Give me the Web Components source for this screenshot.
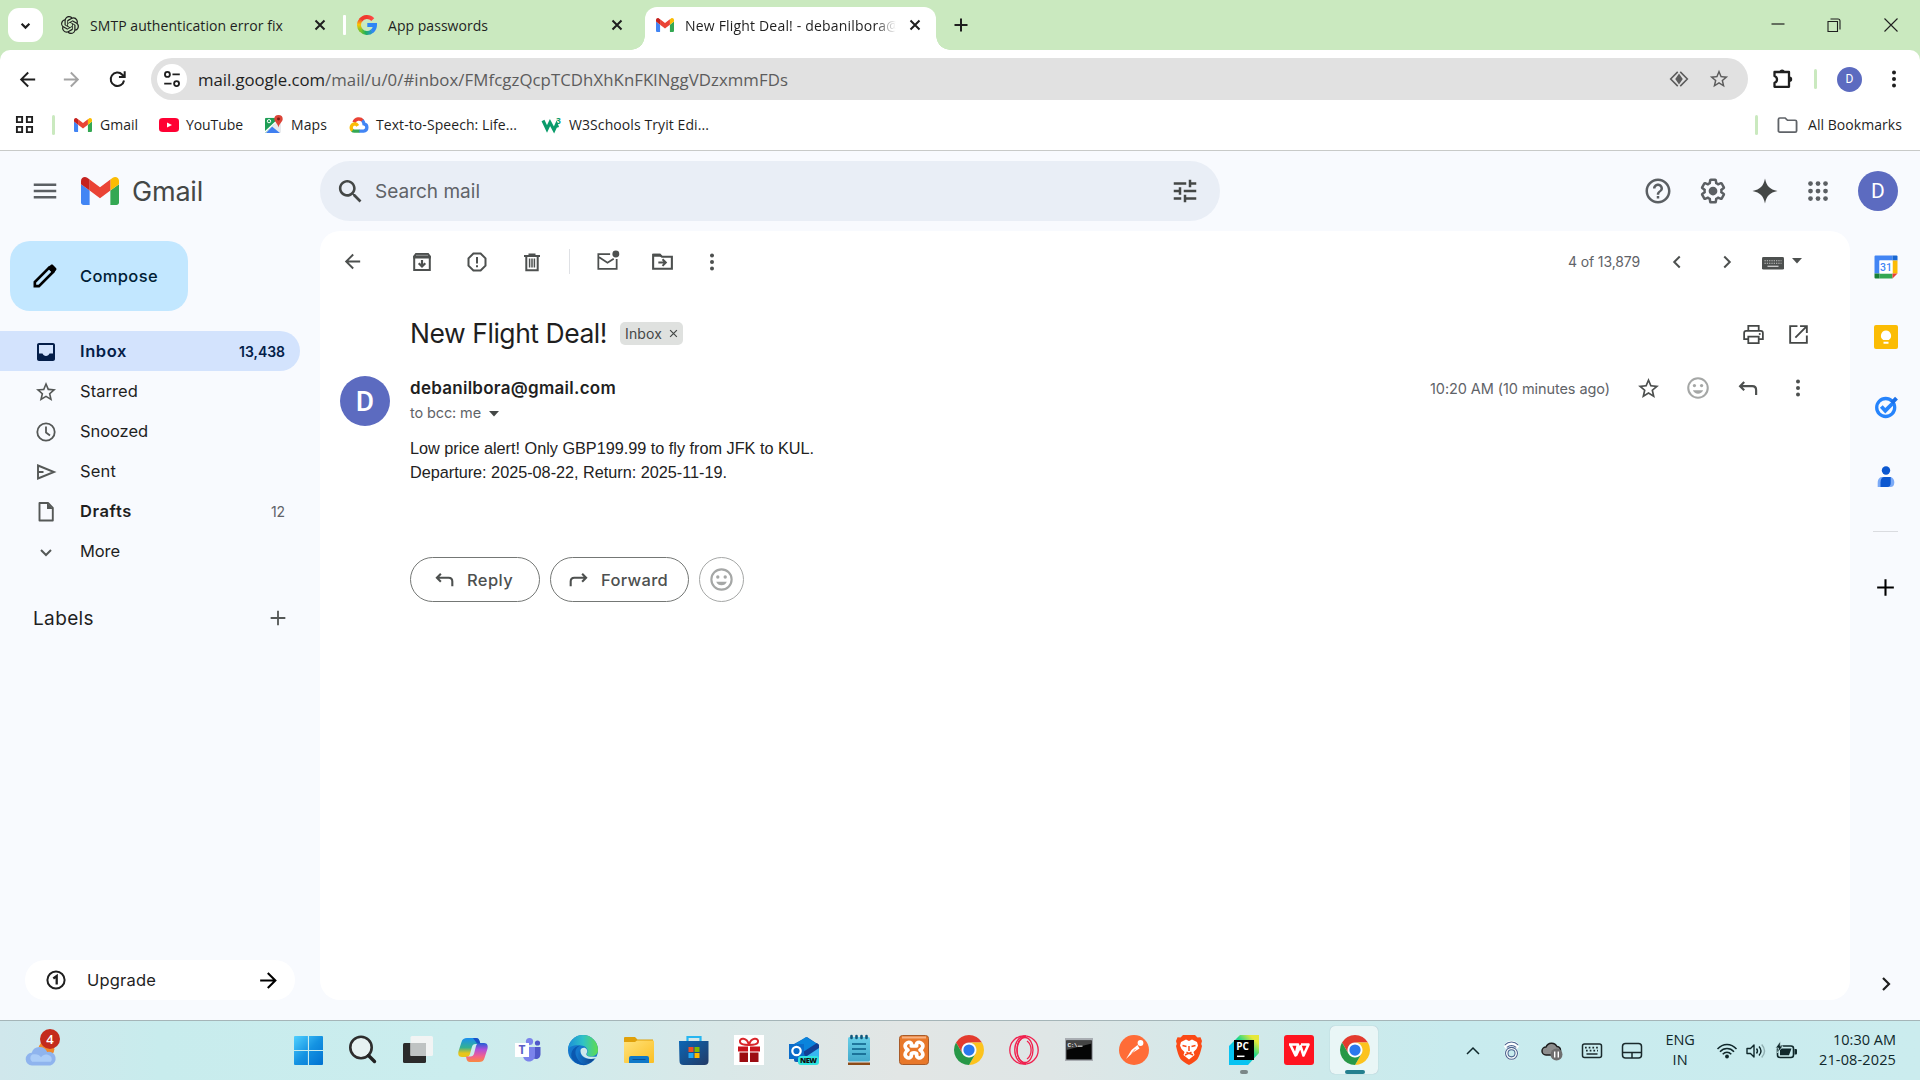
<!DOCTYPE html>
<html lang="en">
<head>
<meta charset="utf-8">
<title>New Flight Deal! - Gmail</title>
<style>
html,body{margin:0;padding:0}
body{width:1920px;height:1080px;overflow:hidden;background:#f8fafd;font-family:Inter,"Open Sans",sans-serif;color:#1f1f1f}
</style>
</head>
<body>
<app-desktop></app-desktop>
<script>
const st = (d, w = 2, extra = '') => `<path d="${d}" fill="none" stroke="currentColor" stroke-width="${w}" ${extra}/>`;
const fl = (d, c = 'currentColor') => `<path d="${d}" fill="${c}"/>`;
const smile = st('M12 3a9 9 0 1 0 0 18a9 9 0 1 0 0-18z', 1.9) + '<circle cx="8.7" cy="9.8" r="1.5" fill="currentColor"/><circle cx="15.3" cy="9.8" r="1.5" fill="currentColor"/>' + fl('M7.3 14h9.400c-.8 2-2.600 3.200-4.700 3.200S8.100 16 7.300 14z');
const chrome = '<path d="M1.610 6A12 12 0 0 1 22.390 6H12A6 6 0 0 0 6.800 15Z" fill="#e33b2e"/><path d="M22.390 6A12 12 0 0 1 12 24L17.200 15A6 6 0 0 0 12 6Z" fill="#fcc31e"/><path d="M12 24A12 12 0 0 1 1.610 6L6.800 15A6 6 0 0 0 17.200 15Z" fill="#279847"/><circle cx="12" cy="12" r="5.700" fill="#fff"/><circle cx="12" cy="12" r="4.500" fill="#2a78ee"/>';
const ICONS = {
  chev: ['0 0 24 24', st('M6.500 9.500l5.500 5.500 5.500-5.500', 3)],
  chevThin: ['0 0 24 24', st('M7 10l5 5 5-5', 2)],
  left: ['0 0 24 24', st('M15 6l-6 6 6 6', 2.2)],
  right: ['0 0 24 24', st('M9 6l6 6-6 6', 2.2)],
  up: ['0 0 24 24', st('M4 16l8-8 8 8', 2)],
  x: ['0 0 12 12', st('M1.500 1.500l9 9M10.500 1.500l-9 9', 2)],
  xThin: ['0 0 12 12', st('M1.500 1.500l9 9M10.500 1.500l-9 9', 1.6)],
  winx: ['0 0 14 14', st('M.5.5l13 13M13.500.5l-13 13', 1.1)],
  min: ['0 0 14 14', st('M.5 6h13', 1.2)],
  restore: ['0 0 14 14', st('M1 3.500h9.500V13.500H1zM3.500 1H11a2 2 0 0 1 2 2v8.500', 1.1)],
  plus: ['0 0 24 24', st('M12 4v16M4 12h16', 2)],
  plusBold: ['0 0 16 16', st('M8 1.500v13M1.500 8h13', 2)],
  back: ['0 0 24 24', fl('M20 11H7.830l5.590-5.590L12 4l-8 8 8 8 1.410-1.410L7.830 13H20v-2z')],
  fwd: ['0 0 24 24', fl('M12 4l-1.410 1.410L16.170 11H4v2h12.170l-5.580 5.590L12 20l8-8z')],
  reload: ['0 0 24 24', st('M18.800 13a7 7 0 1 1-1.800-6l1.600 1.700M19.500 3.500V9.500H13.500', 2.1)],
  site: ['0 0 24 24', '<circle cx="7" cy="7" r="2.700" fill="none" stroke="currentColor" stroke-width="2"/><circle cx="17" cy="17" r="2.700" fill="none" stroke="currentColor" stroke-width="2"/>' + st('M12.500 7h8M3.500 17h8', 2)],
  lens: ['0 0 24 24', st('M10.500 3.500L2 12l8.500 8.500M13.500 3.500L22 12l-8.500 8.500', 1.9) + fl('M12 5.500l4.500 6.500-4.500 6.500-4.500-6.500z')],
  star: ['0 0 24 24', fl('M22 9.240l-7.190-.62L12 2 9.190 8.630 2 9.240l5.460 4.730L5.820 21 12 17.270 18.180 21l-1.630-7.030L22 9.240zM12 15.400l-3.760 2.270 1-4.280-3.320-2.880 4.380-.38L12 6.100l1.710 4.040 4.380.38-3.320 2.880 1 4.280L12 15.400z')],
  puzzle: ['0 0 24 24', st('M3.500 5h14.500v14.800H3.500v-4c1.600-.6 2.500-1.800 2.500-3.400s-.9-2.800-2.500-3.400z', 2.300, 'stroke-linejoin="round"') + fl('M8.500 5a2.600 2.600 0 0 1 5.200 0zM18.500 9.600a2.700 2.700 0 0 1 0 5.400z')],
  dots: ['0 0 24 24', '<g fill="currentColor"><circle cx="12" cy="5.500" r="2"/><circle cx="12" cy="12" r="2"/><circle cx="12" cy="18.500" r="2"/></g>'],
  grid4: ['0 0 20 20', st('M2 2h5.500v5.500H2zM12.500 2H18v5.500h-5.500zM2 12.500h5.500V18H2zM12.500 12.500H18V18h-5.500z', 2)],
  folder: ['0 0 22 20', st('M1.500 4c0-1 .6-1.800 1.500-1.800h5.500l2.500 2.500h8c.9 0 1.500.7 1.500 1.600v10c0 .9-.6 1.600-1.500 1.600H3c-.9 0-1.500-.7-1.500-1.600z', 1.900)],
  gmail: ['52 42 88 66', '<path fill="#4285f4" d="M58 108h14V74L52 59v43c0 3.320 2.690 6 6 6"/><path fill="#34a853" d="M120 108h14c3.320 0 6-2.690 6-6V59l-20 15"/><path fill="#fbbc04" d="M120 48v26l20-15v-8c0-7.420-8.470-11.650-14.400-7.200"/><path fill="#ea4335" d="M72 74V48l24 18 24-18v26L96 92"/><path fill="#c5221f" d="M52 51v8l20 15V48l-5.600-4.200c-5.940-4.450-14.400-.22-14.400 7.200"/>'],
  youtube: ['0 0 20 17', '<rect y="0" width="20" height="17" rx="4" fill="#ff0033"/><path d="M8 5.500v6l5-3z" fill="#fff"/>'],
  maps: ['0 0 18 20', '<clipPath id="c"><rect y="3" width="16" height="16" rx="1.500"/></clipPath><g clip-path="url(#c)"><path d="M0 3h16v16H0z" fill="#e8eaed"/><path d="M0 3h12L9 10 0 19z" fill="#1e9e55"/><path d="M1 19l6-7 8 7z" fill="#3f7ff0"/><path d="M0 18L11 7" stroke="#fff" stroke-width="1.500"/></g><circle cx="4" cy="6.500" r="1.700" fill="none" stroke="#fff"/><path d="M13.500 0a4.200 4.200 0 0 1 4.200 4.200c0 3-3.400 4.500-4.200 9-.8-4.500-4.200-6-4.200-9A4.200 4.200 0 0 1 13.500 0z" fill="#db4437"/><circle cx="13.500" cy="4.200" r="1.500" fill="#7b1b14"/>'],
  gcloud: ['0 0 24 20', '<g fill="none" stroke-width="4"><path d="M6 7.500A6.200 6.200 0 0 1 16.500 5.600" stroke="#ea4335"/><path d="M16 5.300a6 6 0 0 1 2 4A4.300 4.300 0 0 1 17.500 17.800H12" stroke="#4285f4"/><path d="M12.500 17.800H6.500a4.300 4.300 0 0 1-2.800-1" stroke="#34a853"/><path d="M4.200 17A4.500 4.500 0 0 1 6.500 9.200c1.800 0 3.200 1 4 2.400" stroke="#fbbc05"/></g>'],
  w3: ['0 0 21 20', '<path d="M2 5.500l4 8.500 3-6.500 4 7.500 2.500-5.500 1 3" fill="none" stroke="#0a9b6a" stroke-width="3.200"/><text x="15" y="9" font-family="Open Sans" font-size="8.500" font-weight="700" fill="#0a9b6a">3</text>'],
  openai: ['0 0 24 24', fl('M22.282 9.821a5.985 5.985 0 0 0-.516-4.910 6.046 6.046 0 0 0-6.510-2.900A6.065 6.065 0 0 0 4.981 4.180a5.985 5.985 0 0 0-3.998 2.900 6.046 6.046 0 0 0 .743 7.097 5.980 5.980 0 0 0 .510 4.911 6.051 6.051 0 0 0 6.515 2.900A5.985 5.985 0 0 0 13.260 24a6.056 6.056 0 0 0 5.772-4.206 5.990 5.990 0 0 0 3.997-2.900 6.056 6.056 0 0 0-.747-7.073zM13.260 22.430a4.476 4.476 0 0 1-2.876-1.040l.141-.081 4.779-2.758a.795.795 0 0 0 .392-.681v-6.737l2.020 1.168a.071.071 0 0 1 .038.052v5.583a4.504 4.504 0 0 1-4.494 4.494zM3.600 18.304a4.470 4.470 0 0 1-.535-3.014l.142.085 4.783 2.759a.771.771 0 0 0 .780 0l5.843-3.369v2.332a.080.080 0 0 1-.033.062L9.740 19.950a4.500 4.500 0 0 1-6.140-1.646zM2.340 7.896a4.485 4.485 0 0 1 2.366-1.973V11.600a.766.766 0 0 0 .388.676l5.815 3.355-2.020 1.168a.076.076 0 0 1-.071 0l-4.830-2.786A4.504 4.504 0 0 1 2.340 7.872zm16.597 3.855l-5.833-3.387L15.119 7.200a.076.076 0 0 1 .071 0l4.830 2.791a4.494 4.494 0 0 1-.676 8.105v-5.678a.790.790 0 0 0-.407-.667zm2.010-3.023l-.141-.085-4.774-2.782a.776.776 0 0 0-.785 0L9.409 9.230V6.897a.066.066 0 0 1 .028-.061l4.830-2.787a4.500 4.500 0 0 1 6.680 4.660zm-12.640 4.135l-2.020-1.164a.080.080 0 0 1-.038-.057V6.075a4.500 4.500 0 0 1 7.375-3.453l-.142.080L8.704 5.460a.795.795 0 0 0-.393.681zm1.097-2.365l2.602-1.500 2.607 1.500v2.999l-2.597 1.500-2.607-1.500z')],
  google: ['0 0 20 20', '<defs><linearGradient id="a" x1="0" x2="1"><stop offset=".5" stop-color="#f03a2e"/><stop offset="1" stop-color="#fd4a45"/></linearGradient><linearGradient id="b" x1="0" y1="0" x2="0" y2="1"><stop offset="0" stop-color="#f2552c"/><stop offset=".45" stop-color="#fdc302"/><stop offset="1" stop-color="#7fc22b"/></linearGradient><linearGradient id="d" x1="0" x2="1"><stop offset="0" stop-color="#7bc22d"/><stop offset=".4" stop-color="#20b15a"/><stop offset="1" stop-color="#2b90e0"/></linearGradient></defs><g fill="none" stroke-width="4"><path d="M3.500 5.300A8 8 0 0 1 15.800 4.600" stroke="url(#a)"/><path d="M3.900 4.800A8 8 0 0 0 4.200 15.500" stroke="url(#b)"/><path d="M4 15.300A8 8 0 0 0 15.300 16" stroke="url(#d)"/><path d="M10.300 10H18A8 8 0 0 1 15 16.200" stroke="#2f85f5"/></g>'],
  menu: ['0 0 24 24', fl('M3 18h18v-2H3v2zm0-5h18v-2H3v2zm0-7v2h18V6H3z')],
  search: ['0 0 24 24', fl('M15.500 14h-.79l-.28-.27C15.410 12.590 16 11.110 16 9.500 16 5.910 13.090 3 9.500 3S3 5.910 3 9.500 5.910 16 9.500 16c1.610 0 3.090-.59 4.230-1.570l.27.28v.79l5 4.990L20.490 19l-4.990-5zm-6 0C7.010 14 5 11.990 5 9.500S7.010 5 9.500 5 14 7.010 14 9.500 11.990 14 9.500 14z')],
  tune: ['0 0 24 24', fl('M3 17v2h6v-2H3zM3 5v2h10V5H3zm10 16v-2h8v-2h-8v-2h-2v6h2zM7 9v2H3v2h4v2h2V9H7zm14 4v-2H11v2h10zm-6-4h2V7h4V5h-4V3h-2v6z')],
  help: ['0 0 24 24', fl('M11 18h2v-2h-2v2zm1-16C6.480 2 2 6.480 2 12s4.480 10 10 10 10-4.480 10-10S17.520 2 12 2zm0 18c-4.410 0-8-3.590-8-8s3.590-8 8-8 8 3.590 8 8-3.590 8-8 8zm0-14c-2.210 0-4 1.790-4 4h2c0-1.100.9-2 2-2s2 .9 2 2c0 2-3 1.750-3 5h2c0-2.250 3-2.500 3-5 0-2.210-1.790-4-4-4z')],
  gear: ['0 0 24 24', '<g transform="translate(1.200 1.200) scale(.9)"><path fill="none" stroke="currentColor" stroke-width="2.200" d="M19.430 12.980c.04-.32.07-.64.07-.98 0-.34-.03-.66-.07-.98l2.110-1.650c.19-.15.24-.42.12-.64l-2-3.460c-.09-.16-.26-.25-.44-.25-.06 0-.12.010-.17.030l-2.490 1c-.52-.4-1.080-.73-1.690-.98l-.38-2.650C14.460 2.180 14.250 2 14 2h-4c-.25 0-.46.18-.49.42l-.38 2.650c-.61.25-1.170.59-1.690.98l-2.490-1c-.06-.02-.12-.03-.18-.03-.17 0-.34.09-.43.25l-2 3.460c-.13.22-.07.49.12.64l2.110 1.650c-.04.32-.07.65-.07.98 0 .33.03.66.07.98l-2.110 1.650c-.19.15-.24.42-.12.64l2 3.460c.09.16.26.25.44.25.06 0 .12-.01.17-.03l2.490-1c.52.4 1.080.73 1.690.98l.38 2.650c.03.24.24.42.49.42h4c.25 0 .46-.18.49-.42l.38-2.650c.61-.25 1.170-.59 1.690-.98l2.490 1c.06.02.12.03.18.03.17 0 .34-.09.43-.25l2-3.460c.12-.22.07-.49-.12-.64l-2.110-1.650z"/></g><circle cx="12" cy="12" r="3.500" fill="currentColor"/>'],
  spark: ['0 0 24 24', fl('M12 2c1.300 6.200 3.800 8.700 10 10-6.200 1.300-8.700 3.800-10 10-1.300-6.200-3.800-8.700-10-10 6.200-1.300 8.700-3.800 10-10z')],
  apps: ['0 0 24 24', '<g fill="currentColor">' + [6, 12, 18].map(y => [6, 12, 18].map(x => `<circle cx="${x}" cy="${y}" r="1.900"/>`).join('')).join('') + '</g>'],
  pencil: ['0 0 24 24', st('M4 20v-3.400L15.900 4.700l3.400 3.400L7.400 20z', 2.200) + fl('M14.500 5l2.600-2.500c.6-.5 1.400-.5 2 0l2.400 2.400c.5.6.5 1.400 0 2L19 9.500z')],
  inbox: ['0 0 24 24', fl('M19 3H5c-1.100 0-2 .9-2 2v14c0 1.100.9 2 2 2h14c1.100 0 2-.9 2-2V5c0-1.100-.9-2-2-2zm0 10.500h-3.500c-.6 1.500-1.900 2.500-3.500 2.500s-2.900-1-3.500-2.500H5V5h14v8.500z')],
  clock: ['0 0 24 24', '<circle cx="12" cy="12" r="8.700" fill="none" stroke="currentColor" stroke-width="1.800"/>' + st('M12 6.500v6l4 3', 1.800)],
  send: ['0 0 24 24', st('M4 5.500L20 12 4 18.500zM4 12h5.500', 1.900)],
  doc: ['0 0 24 24', st('M7 3h7l4.800 4.800V20.500H5.500V3z', 1.900, 'stroke-linejoin="round"') + fl('M13 3v6h6z')],
  one: ['0 0 20 20', '<circle cx="10" cy="10" r="8.600" fill="none" stroke="currentColor" stroke-width="2"/>' + st('M7.300 8.500L10.700 6v8.500', 2.300)],
  archive: ['0 0 24 24', st('M4.200 6v14h15.600V6', 2) + fl('M5.500 3h13l2.300 3v2.500H3.200V6z') + st('M6 5.300h12', .8, 'opacity=".5" style="color:#fff"') + st('M12 10v6M8.700 13.200l3.300 3.300 3.300-3.300', 2.200)],
  spam: ['0 0 24 24', st('M8.400 3.500h7.200l4.900 4.900v7.200l-4.900 4.900H8.400l-4.900-4.900V8.400z', 2) + st('M12 7v6.500M12 15.200v2', 2)],
  trash: ['0 0 24 24', st('M6.300 6.500v13.800h11.400V6.500', 2) + fl('M8.500 3.500h7V5H20v2H4V5h4.500z') + st('M9.600 8.500v9M14.400 8.500v9M12 8.500v9', 1.500)],
  unread: ['0 0 24 24', st('M14.500 5H3.200v14h17.600V9.500M4 8l8 5.200 6-3.800', 1.700) + '<circle cx="20" cy="4.800" r="3.300" fill="currentColor"/>'],
  move: ['0 0 24 24', st('M3 5.500h6.500l2 2H21V19H3z', 2) + fl('M3 4.500h7l2 3H3z') + st('M8 13h7M12 9.800l3.200 3.200-3.200 3.200', 1.900)],
  keyboard: ['0 0 22 14', '<rect width="22" height="13.500" rx="1.500" fill="currentColor"/><path d="M2.500 4h17M2.500 6.800h17" stroke="#c8c8c8" stroke-width="1.200" stroke-dasharray="1.300 1"/><path d="M5.500 10h11" stroke="#d8d8d8" stroke-width="1.300"/>'],
  caret: ['0 0 10 6', fl('M0 0h10L5 5.500z')],
  print: ['0 0 24 24', st('M7 8.500V3.800h10v4.700M7 16.500H3V10.500c0-1.100.9-2 2-2h14c1.100 0 2 .9 2 2v6h-4M7 14h10v6.200H7z', 1.700) + '<circle cx="18" cy="11.500" r="1" fill="currentColor"/>'],
  open: ['0 0 24 24', st('M11 4H4v16h16v-7M13.500 4H20v6.500M20 4L9 15', 1.800)],
  smile: ['0 0 24 24', smile],
  reply: ['0 0 24 24', st('M8.500 6.500L4.700 10.300l3.800 3.800M5 10.300H16c2.300 0 3.500 1.300 3.500 3.700V18.500', 2)],
  forward: ['0 0 24 24', st('M15.500 6.500l3.800 3.800-3.800 3.800M19 10.300H8c-2.300 0-3.500 1.300-3.500 3.700V18.500', 2)],
  calendar: ['0 0 24 24', '<path d="M1.500.5h17v5h-13v13h-5V1.500a1 1 0 0 1 1-1z" fill="#4285f4"/><path d="M18.500.5h4a1 1 0 0 1 1 1v4h-5z" fill="#1967d2"/><path d="M18.500 5.500h5v13h-5z" fill="#fbbc04"/><path d="M5.500 18.500h13v5h-13z" fill="#34a853"/><path d="M.5 18.500h5v5h-4a1 1 0 0 1-1-1z" fill="#188038"/><path d="M18.500 18.500h5l-5 5z" fill="#ea4335"/><path d="M5.500 5.500h13v13h-13z" fill="#fff"/><text x="12" y="16" text-anchor="middle" font-family="Roboto" font-size="10.500" font-weight="500" fill="#4285f4">31</text>'],
  keep: ['0 0 24 24', '<rect width="24" height="24" rx="2" fill="#fbbc04"/><path d="M12 5.500a5.200 5.200 0 0 1 2.800 9.500H9.200A5.200 5.200 0 0 1 12 5.500zM9.500 16.800h5v2h-5z" fill="#fff"/>'],
  tasks: ['0 0 24 24', '<circle cx="11.700" cy="12.500" r="9" fill="none" stroke="#2684fc" stroke-width="3.300"/><path d="M7.300 11.500l4 4.200L20 7" fill="none" stroke="#2684fc" stroke-width="3.800"/><path d="M17.800 7.800l4.700-4.700" stroke="#1a6fe8" stroke-width="4"/>'],
  contacts: ['0 0 24 24', '<circle cx="12" cy="5.500" r="4.200" fill="#0b57d0"/><path d="M3.700 22v-4.500c0-3.500 2-5.500 5-5.500h6.600c3 0 5 2 5 5.500 0 3-1.500 4.500-4 4.500z" fill="#7baaf7"/><path d="M6.500 22v-4.500c0-3.500 1.500-5.500 4-5.500h6.200v6c0 2.500-1.200 4-3.500 4z" fill="#0b57d0"/>'],
  weather: ['0 0 36 40', '<circle cx="24" cy="18" r="9" fill="#f08a2c"/><path d="M8 35a7 7 0 0 1-.5-14 9.500 9.500 0 0 1 17.500-1 7.600 7.600 0 0 1 3.500 15z" transform="translate(0 1)" fill="#8fb4ee"/><path d="M8 32a5 5 0 0 1 0-8c5-1 8 0 10 3 3-4 7-4 11-1a5 5 0 0 1 0 6z" fill="#abcdf8"/>'],
  win: ['0 0 29 29', '<linearGradient id="a" x2="1" y2="1"><stop stop-color="#4fd0ff"/><stop offset=".5" stop-color="#1593e2"/><stop offset="1" stop-color="#0071d0"/></linearGradient><path d="M1 0h12.900v13.900H0V1a1 1 0 0 1 1-1zM15 0h13a1 1 0 0 1 1 1v12.900H15zM0 15h13.900v14H1a1 1 0 0 1-1-1zM15 15h14v13a1 1 0 0 1-1 1H15z" fill="url(#a)"/>'],
  wsearch: ['0 0 30 30', '<circle cx="13" cy="12.500" r="10.700" fill="#e6f2f2" stroke="#2d2d2d" stroke-width="2.600"/><path d="M20.500 20.500l6 6" stroke="#222" stroke-width="3.400" stroke-linecap="round"/>'],
  taskview: ['0 0 30 30', '<rect y="8" width="23" height="20" rx="1.500" fill="#2b2b2b"/><rect x="7.500" y="1" width="22.500" height="20" rx="1.500" fill="#f2f4f4"/><path d="M7.500 8H23v13H7.500z" fill="#bfc3c3"/>'],
  copilot: ['0 0 30 30', '<defs><linearGradient id="a" x2="0" y2="1"><stop stop-color="#1a8ff0"/><stop offset=".5" stop-color="#33b093"/><stop offset=".8" stop-color="#e8c51a"/></linearGradient><linearGradient id="b" x2="0" y2="1"><stop stop-color="#2160d6"/><stop offset=".35" stop-color="#b14fd8"/><stop offset=".7" stop-color="#f3628c"/><stop offset="1" stop-color="#f98a3e"/></linearGradient></defs><path d="M9 3h9c2 0 3 1 3.500 3l1 3h-5c-2 0-3 1-3.600 3L12 19c-.6 2-1.700 3-3.700 3H4C.5 22-.3 19 .6 16L3.500 7C4.500 4 6 3 9 3z" fill="url(#a)"/><path d="M21 27h-9c-2 0-3-1-3.500-3L8 21.500h4.500c2 0 3-1 3.600-3L18 11c.6-2 1.700-3 3.700-3H26c3.500 0 4.300 3 3.400 6l-2.900 9c-1 3-2.500 4-5.500 4z" fill="url(#b)"/><path d="M15 3h3c2 0 3 1 3.500 3l.8 2.500H19z" fill="#1950c8"/>'],
  teams: ['0 0 30 30', '<circle cx="16.500" cy="6.500" r="3.600" fill="#7b83eb"/><circle cx="24.500" cy="8" r="2.600" fill="#5059c9"/><path d="M20 12h7.500v7c0 3-2 5-4.500 5s-3-1-3-1z" fill="#5059c9"/><path d="M10 12h12v8c0 4-2.500 6.500-6 6.500S10 24 10 20z" fill="#7b83eb"/><rect x="2" y="8" width="14" height="14" fill="#fff"/><text x="9" y="19" text-anchor="middle" font-family="Open Sans" font-size="12" font-weight="700" fill="#5b5fc7">T</text>'],
  edge: ['0 0 30 30', '<defs><linearGradient id="a" x2="1"><stop stop-color="#1b8fd8"/><stop offset=".5" stop-color="#2fc2c6"/><stop offset="1" stop-color="#5fdc4e"/></linearGradient><linearGradient id="b" x2="1"><stop stop-color="#1473c8"/><stop offset="1" stop-color="#0f3f86"/></linearGradient></defs><circle cx="15" cy="15" r="15" fill="#1577cc"/><path d="M0 15A15 15 0 0 1 30 15c0 4-3 6.500-7 6.500-3 0-5-1.500-4-3 2-3-.5-8-6-8C7 9.500 1 11 0 15z" fill="url(#a)"/><path d="M13 10.500c-5 1-7 6-4.500 11.500S17 30 22 28c-5 4-13 2-17-3C1 20 4 11 13 10.500z" fill="#0a58b0"/><path d="M12.500 15c-1.500 6 4 11 14.500 8-3 5-8 7-13 5.500C8 25 9 18 12.500 15z" fill="url(#b)"/><path d="M12.500 15c1-2.500 5-3 6.300-.5.900 1.700.2 3-.3 4-.7 1.700 1.200 3.200 5 3.200H30L27 23.500C19 25 12 22 12.500 15z" fill="#cfe9ec"/>'],
  files: ['0 0 30 30', '<path d="M1 2h10l2.500 2.500H29V12H0V3a1 1 0 0 1 1-1z" fill="#e0a10a"/><linearGradient id="a" x2="1" y2="1"><stop stop-color="#ffe27a"/><stop offset="1" stop-color="#fbbf23"/></linearGradient><path d="M0 7h11l2-1.500h16a1 1 0 0 1 1 1V27a1 1 0 0 1-1 1H1a1 1 0 0 1-1-1z" fill="url(#a)"/><path d="M5 28v-5a2 2 0 0 1 2-2h16a2 2 0 0 1 2 2v5z" fill="#0f78c8"/><path d="M8.500 24.500h13" stroke="#0a4f94"/>'],
  store: ['0 0 30 30', '<path d="M8.500 6.500V2h13v4.500" fill="none" stroke="#27b6f0" stroke-width="2.200"/><linearGradient id="a" x2="1" y2="1"><stop stop-color="#0b66b5"/><stop offset="1" stop-color="#223a66"/></linearGradient><path d="M0 6h29.500v20a4 4 0 0 1-4 4h-21a4 4 0 0 1-4-4z" fill="url(#a)"/><path d="M9.500 12H14.500v5h-5z" fill="#f25022"/><path d="M15.500 12h5v5h-5z" fill="#7fba00"/><path d="M9.500 18h5v5h-5z" fill="#1fa8f4"/><path d="M15.500 18h5v5h-5z" fill="#ffb900"/>'],
  gift: ['0 0 30 30', '<path d="M0 0h30v30H0z" fill="#fff"/><path d="M4 11.500h10v5H4zM16 11.500h10v5H16z" fill="#c9141c"/><path d="M5.500 17.500H14V27H5.500zM16 17.500h8.500V27H16z" fill="#9c0d12"/><path d="M15 10C13 2 5 2.500 6 7c.5 2.500 5 3 9 3zM15 10c2-8 10-7.500 9-3-.5 2.500-5 3-9 3z" fill="none" stroke="#d9252a" stroke-width="2"/>'],
  outlook: ['0 0 30 30', '<path d="M5 9L18 2l12 8v15a2 2 0 0 1-2 2H7a2 2 0 0 1-2-2z" fill="#0f5fb8"/><path d="M17 2l13 8-14 9L6 9z" fill="#0a84dc"/><path d="M14 17L28 8l2 2v5L17 22z" fill="#123f94"/><path d="M18 21l12-8v12h-8z" fill="#39b6f2"/><rect y="9" width="15" height="15" fill="#0a6cca"/><circle cx="7.500" cy="16" r="4.200" fill="none" stroke="#fff" stroke-width="2.200"/><rect x="9" y="21" width="21" height="9" rx="3" fill="#2fe3e0"/><text x="19.500" y="28.400" text-anchor="middle" textLength="17" font-family="Open Sans" font-size="7.500" font-weight="800" fill="#111">NEW</text>'],
  notepad: ['0 0 30 30', '<linearGradient id="a" x2="0" y2="1"><stop stop-color="#69cfe8"/><stop offset="1" stop-color="#43a9cb"/></linearGradient><path d="M4 26.500h22V30H4z" fill="#8c4b17"/><path d="M4 25.500h22v2H4z" fill="#e9edf0"/><rect x="4" y="2" width="22" height="24.500" rx="1.500" fill="url(#a)"/><path d="M8 9h14M8 14h14M8 19h14" stroke="#0b5e86" stroke-width="1.700"/><path d="M7.500 1v2M12.500 1v2M17.500 1v2M22.500 1v2" stroke="#12587c" stroke-width="2.600" stroke-linecap="round"/>'],
  xampp: ['0 0 30 30', '<rect x=".5" y=".5" width="29" height="29" rx="3" fill="#e8782a" stroke="#a85a28"/><path d="M3 1.500h24v2H3z" fill="#f6b182"/><path d="M7.500 8.300C9.500 6.300 13.500 7.300 12.300 11h5.400C16.500 7.300 20.500 6.300 22.500 8.300C25.500 11 23 13.700 21 15C23 16.300 25.500 19.500 22.500 22C20.500 24 17 22.700 17.700 19C17.500 17.500 12.500 17.500 12.300 19C13 22.700 9.500 24 7.500 22C4.500 19.500 7 16.300 9 15C7 13.700 4.500 11 7.500 8.300z" fill="none" stroke="#fff" stroke-width="3.600" stroke-linejoin="round"/>'],
  chrome: ['0 0 24 24', chrome],
  opera: ['0 0 30 30', '<g fill="none" stroke="#f0204e" stroke-width="1.300"><circle cx="15" cy="15" r="14.200"/><ellipse cx="13.500" cy="15" rx="9.800" ry="13.900" opacity=".0"/><path d="M17 1C2 1 2 29 17 29"/><path d="M8 15A8 12.500 0 0 0 24 15A8 12.500 0 0 0 8 15"/><path d="M16.500 1.200C11 3 8 8 8 15s3 12 8.500 13.800"/><path d="M18 6c5.500 4 5.500 14 0 18"/></g>'],
  cmd: ['0 0 28 24', '<rect width="28" height="23" fill="#a8adb2"/><rect x="1.300" y="2.500" width="25.400" height="19" fill="#050505"/><path d="M1.300 2.500h25.400v3L1.300 12z" fill="#444"/><text x="2.500" y="8.500" font-family="Liberation Mono" font-size="6" font-weight="700" textLength="10" fill="#eee">C:\\</text><path d="M13 8.200h4.500" stroke="#eee"/>'],
  postman: ['0 0 30 30', '<circle cx="15" cy="15" r="15" fill="#ff6c37"/><circle cx="21.500" cy="8" r="2.900" fill="#fff"/><path d="M18.500 10L12.500 15 7 24l7-6.500 6.500-4z" fill="#fff"/><path d="M12.500 18.500L16.500 14" stroke="#ff6c37" stroke-width=".7"/>'],
  brave: ['0 0 26 30', '<path d="M7 0h12l2.500 2.500 3-.3L26 6l-.8 3L26 11c-1.500 6-2.500 10-4.500 13-1 1.500-4.500 4-8.500 6-4-2-7.500-4.500-8.500-6C2.500 21 1.500 17 0 11l.8-2L0 6l1.500-3.800 3 .3z" fill="#fb4a16"/><path d="M13 6l3-1.500L21 7l1 3.500-1.500 3.500-3 3 1 3-5.500 4.500L7.500 20l1-3-3-3L4 10.500 5 7l5-2.500z" fill="#fff"/><path d="M6.500 10.500l4 1M19.500 10.500l-4 1M13 11v5M10.500 17l2.500 1.700 2.500-1.700M9 20l4-2 4 2" stroke="#fb4a16" stroke-width="1.500" fill="none"/>'],
  pycharm: ['0 0 30 30', '<linearGradient id="a" x1="0" y1="1" x2="1" y2="0"><stop offset=".35" stop-color="#07c3f2"/><stop offset=".6" stop-color="#21d789"/><stop offset=".85" stop-color="#e6e83a"/></linearGradient><path d="M11 0h19v18L19 30H0V11z" fill="url(#a)"/><path d="M5 5h20v20H5z" fill="#000"/><text x="7.300" y="15" font-family="Open Sans" font-size="10" font-weight="700" fill="#fff">PC</text><path d="M8 21.300h7.500" stroke="#fff" stroke-width="1.500"/>'],
  wps: ['0 0 30 30', '<rect width="30" height="30" rx="3" fill="#ff1420"/><path d="M5 9.500h9L11.500 20.500 6.500 10M12 20.500L16.500 11l3 9.500L24.500 9.500H17" fill="none" stroke="#fff" stroke-width="2.600" stroke-linejoin="round"/>'],
  signal: ['0 0 20 20', '<g fill="none" stroke="#fff" stroke-width="3.400"><circle cx="10" cy="13" r="5.500"/><path d="M3.500 4.500c4-4 9-4 13 0M3 7c4-3.500 10-3.500 14 0"/></g><g fill="none" stroke="#4a648f" stroke-width="1.100"><circle cx="10" cy="13" r="6.300"/><circle cx="10" cy="13" r="3.700"/><path d="M3 4c4-4 10-4 14 0M5 6.800c3-2.500 7-2.500 10 0"/></g>'],
  onedrive: ['0 0 22 20', '<path d="M5 14a4 4 0 0 1 0-8 6 6 0 0 1 11-.5 4 4 0 0 1 3.500 4V14z" fill="#8d8d8d" stroke="#1d1d1d" stroke-width="1.500"/><circle cx="15.500" cy="13.500" r="6" fill="#6f6f6f"/><path d="M13.700 10.500v6M17.300 10.500v6" stroke="#fff" stroke-width="1.400"/>'],
  tkeys: ['0 0 22 18', '<rect x="1.500" y="2" width="19" height="13.500" rx="2" fill="none" stroke="#1b2a2c" stroke-width="1.500"/><path d="M4 5.700h14M5 8.700h12" stroke="#1b2a2c" stroke-width="1.700" stroke-dasharray="1.700 2"/><path d="M5.500 12h11" stroke="#1b2a2c" stroke-width="1.500"/>'],
  touchpad: ['0 0 22 18', '<rect x="1.500" y="1.500" width="19" height="14.500" rx="3" fill="none" stroke="#1b2a2c" stroke-width="1.500"/><path d="M1.500 10.500h19M11 10.500V16" stroke="#1b2a2c" stroke-width="1.500"/>'],
  wifi: ['0 0 22 18', '<g fill="none" stroke="#10282b" stroke-width="1.500"><path d="M1.500 7c5.500-6 13.500-6 19 0M4 9.700c4-4.300 10-4.300 14 0M6.700 12.200c2.500-2.700 6-2.700 8.600 0"/></g><circle cx="11" cy="14.500" r="1.900" fill="#10282b"/>'],
  volume: ['0 0 22 18', '<path d="M2 6.500h3.500L9 3v12l-3.500-3.500H2z" fill="none" stroke="#10282b" stroke-width="1.400" stroke-linejoin="round"/><g fill="none" stroke="#10282b" stroke-width="1.400"><path d="M11.500 6.500c1.200 1.500 1.200 3.500 0 5M14 4.500c2.400 2.700 2.400 6.300 0 9"/><path d="M16.700 2.500c3.500 4 3.500 9 0 13" opacity=".3"/></g>'],
  battery: ['0 0 22 18', '<rect x="2.500" y="4" width="16" height="11.500" rx="2.500" fill="none" stroke="#10282b" stroke-width="1.600"/><path d="M5 13.200V6.500h11.500l-2.500 6.700z" fill="#10282b"/><path d="M19.500 7h1.500a1 1 0 0 1 1 1v3.500a1 1 0 0 1-1 1h-1.500z" fill="#10282b"/><path d="M5.500-1L.5 6h3L2.500 11 8 4H5.200z" fill="#10282b" stroke="#cdeeef" stroke-width=".7"/>']
};

/* <ui-icon name w h g>: g is the gap before the icon */
class UiIcon extends HTMLElement {
  connectedCallback() {
    const [vb, body] = ICONS[this.getAttribute('name')];
    const w = this.getAttribute('w') || 24, h = this.getAttribute('h') || w;
    const root = this.shadowRoot || this.attachShadow({mode: 'open'});
    root.innerHTML = `<style>:host{display:block;flex:none;width:${w}px;height:${h}px;margin-left:${this.getAttribute('g') || 0}px}svg{display:block;overflow:visible}</style><svg viewBox="${vb}" width="${w}" height="${h}" preserveAspectRatio="none">${body}</svg>`;
  }
}
/* <ui-text w s g>: one line of text, tracked to fill w pixels */
class UiText extends HTMLElement {
  connectedCallback() {
    const w = +this.getAttribute('w');
    const root = this.shadowRoot || this.attachShadow({mode: 'open'});
    root.innerHTML = `<style>:host{display:block;flex:none;white-space:pre;width:${w}px;font-size:${this.getAttribute('s') || 15}px;margin-left:${this.getAttribute('g') || 0}px}span{display:inline-block}</style><span><slot></slot></span>`;
    const span = root.querySelector('span');
    const nat = span.getBoundingClientRect().width;
    if (nat) span.style.letterSpacing = ((w - nat) / this.textContent.length).toFixed(4) + 'px';
  }
}
const define = (tag, css, html) => customElements.define(tag, class extends HTMLElement {
  connectedCallback() {
    if (this.shadowRoot) return;
    const t = document.createElement('template');
    t.innerHTML = `<style>*{box-sizing:border-box}${css}</style>${typeof html === 'function' ? html(this) : html}`;
    this.attachShadow({mode: 'open'}).append(document.importNode(t.content, true));
  }
});
customElements.define('ui-icon', UiIcon);
customElements.define('ui-text', UiText);

define('user-avatar', ':host{display:flex;flex:none;align-items:center;justify-content:center;border-radius:50%;background:#5c6bc0;color:#fff;font-family:Roboto,sans-serif}', '<slot></slot>');

define('tab-strip', `
:host{display:flex;align-items:center;height:50px;background:#cae9bf;font-family:"Open Sans",sans-serif;color:#1f1f1f}
.find{width:35px;height:34px;margin-left:8px;border-radius:11px;background:#fff;display:flex;align-items:center;justify-content:center}
.sep{width:3px;height:20px;background:#fff;margin:0 0 0 17px;border-radius:1px}
.tab{position:relative;align-self:flex-end;width:291px;height:43px;margin-left:22px;padding:0 0 7px 11px;background:#fff;border-radius:12px 12px 0 0;display:flex;align-items:center}
.tab:before,.tab:after{content:"";position:absolute;bottom:0;width:14px;height:14px}
.tab:before{left:-14px;background:radial-gradient(circle at 0 0,transparent 13.500px,#fff 14px)}
.tab:after{right:-14px;background:radial-gradient(circle at 100% 0,transparent 13.500px,#fff 14px)}
.fade{width:218px;margin-left:11px;-webkit-mask:linear-gradient(90deg,#000 190px,transparent 211px);mask:linear-gradient(90deg,#000 190px,transparent 211px)}
`, `<div class="find"><ui-icon name="chev" w="17"></ui-icon></div>
<ui-icon name="openai" w="18" g="18"></ui-icon><ui-text w="193" s="14" g="11">SMTP authentication error fix</ui-text>
<ui-icon name="x" w="12" g="31"></ui-icon><div class="sep"></div>
<ui-icon name="google" w="20" g="11"></ui-icon><ui-text w="100" s="14" g="11">App passwords</ui-text>
<ui-icon name="x" w="12" g="123"></ui-icon>
<div class="tab"><ui-icon name="gmail" w="18" h="14"></ui-icon><div class="fade"><ui-text w="214" s="14">New Flight Deal! - debanilbora@</ui-text></div><ui-icon name="x" w="12" g="6"></ui-icon></div>
<ui-icon name="plusBold" w="16" g="17"></ui-icon>
<ui-icon name="min" w="14" g="802"></ui-icon><ui-icon name="restore" w="14" g="42"></ui-icon><ui-icon name="winx" w="14" g="43"></ui-icon>`);

define('address-bar', `
:host{display:block;background:#cae9bf;font-family:"Open Sans",sans-serif}
.row{display:flex;align-items:center;height:58px;background:#fff;border-radius:10px 10px 0 0;padding-left:16px}
.omni{display:flex;align-items:center;width:1597px;height:42px;margin-left:22px;border-radius:21px;background:#e1e1e1;padding:0 18px 0 6px}
.site{width:30px;height:30px;border-radius:50%;background:#fff;display:flex;align-items:center;justify-content:center}
.grow{flex:1}.sep{width:3px;height:20px;border-radius:2px;background:#cae9bf;margin-left:19px}
.gray{color:#5c5c5c}
user-avatar{width:25px;height:25px;margin-left:20px;font-size:12px}
`, `<div class="row"><ui-icon name="back" w="23"></ui-icon><ui-icon name="fwd" w="23" g="21" style="color:#a3a3a3"></ui-icon><ui-icon name="reload" w="23" g="23"></ui-icon>
<div class="omni"><div class="site"><ui-icon name="site" w="22"></ui-icon></div>
<ui-text w="127" s="16.800" g="11">mail.google.com</ui-text><ui-text class="gray" w="463" s="16.800">/mail/u/0/#inbox/FMfcgzQcpTCDhXhKnFKlNggVDzxmmFDs</ui-text>
<div class="grow"></div><ui-icon class="gray" name="lens" w="20"></ui-icon><ui-icon class="gray" name="star" w="22" g="19"></ui-icon></div>
<ui-icon name="puzzle" w="24" g="23"></ui-icon><div class="sep"></div><user-avatar>D</user-avatar><ui-icon name="dots" w="24" g="20"></ui-icon></div>`);

define('bookmark-bar', `
:host{display:flex;align-items:center;height:43px;padding:0 18px 9px 15px;background:#fff;border-bottom:1px solid #c8cac8;box-sizing:border-box;font-family:"Open Sans",sans-serif}
.sep{width:3px;height:20px;border-radius:2px;background:#cae9bf;margin-left:18px}.right{margin-left:auto}
`, `<ui-icon name="grid4" w="19"></ui-icon><div class="sep"></div>
<ui-icon name="gmail" w="18" h="14" g="19"></ui-icon><ui-text w="38" s="14" g="8">Gmail</ui-text>
<ui-icon name="youtube" w="20" h="14" g="21"></ui-icon><ui-text w="57" s="14" g="7">YouTube</ui-text>
<ui-icon name="maps" w="18" h="19" g="22"></ui-icon><ui-text w="36" s="14" g="8">Maps</ui-text>
<ui-icon name="gcloud" w="20" h="17" g="22"></ui-icon><ui-text w="141" s="14" g="7">Text-to-Speech: Life...</ui-text>
<ui-icon name="w3" w="21" h="20" g="24"></ui-icon><ui-text w="140" s="14" g="7">W3Schools Tryit Edi...</ui-text>
<div class="sep right"></div><ui-icon name="folder" w="21" h="18" g="19" style="color:#5f6368"></ui-icon><ui-text w="94" s="14" g="10">All Bookmarks</ui-text>`);

define('mail-header', `
:host{display:flex;align-items:center;height:80px;padding-left:30px;box-sizing:border-box;color:#444746}
.search{display:flex;align-items:center;width:900px;height:60px;margin-left:117px;padding:0 20px 0 15px;border-radius:30px;background:#e9eef6}
.grow{flex:1}.q{color:#5f6368}.i{color:#5b5f63}
user-avatar{width:40px;height:40px;margin-left:25px;font-size:21px}
`, `<ui-icon name="menu" w="30" class="i"></ui-icon><ui-icon name="gmail" w="38" h="28" g="21"></ui-icon><ui-text w="71" s="27" g="13">Gmail</ui-text>
<div class="search"><ui-icon name="search" w="31"></ui-icon><ui-text class="q" w="105" s="19" g="9">Search mail</ui-text><div class="grow"></div><ui-icon name="tune" w="30"></ui-icon></div>
<ui-icon class="i" name="help" w="30" g="423"></ui-icon><ui-icon class="i" name="gear" w="30" g="25"></ui-icon><ui-icon name="spark" w="30" g="22"></ui-icon><ui-icon class="i" name="apps" w="30" g="23"></ui-icon><user-avatar>D</user-avatar>`);

define('nav-item', `
:host{display:flex;align-items:center;height:40px;width:300px;padding:0 15px 0 30px;box-sizing:border-box;color:#1f1f1f}
:host([active]){background:#d3e3fd;border-radius:0 20px 20px 0;color:#041e49}
:host([bold]){font-weight:600}
ui-icon{color:#555857}:host([active]) ui-icon{color:#041e49}
.count{margin-left:auto;font-weight:400;color:#5f6368}:host([active]) .count{font-weight:600;color:#041e49}
`, el => { const s = +(el.getAttribute('isize') || 24); return `<ui-icon name="${el.getAttribute('icon')}" w="${s}" style="margin:1px ${29 - s - 3}px 0 ${30 - s - 2}px"></ui-icon><ui-text w="${el.getAttribute('w')}" s="16.500" g="20">${el.getAttribute('label')}</ui-text>
${el.hasAttribute('count') ? `<div class="count"><ui-text w="${el.getAttribute('cw')}" s="14">${el.getAttribute('count')}</ui-text></div>` : ''}`; });

define('mail-sidebar', `
:host{display:flex;flex-direction:column;width:320px;height:769px}
.compose{display:flex;align-items:center;width:178px;height:70px;margin:10px 0 20px 10px;padding-left:20px;border-radius:20px;background:#c2e7ff;color:#001d35;font-weight:500}
.labels{display:flex;align-items:center;width:300px;height:40px;margin-top:27px;padding:0 9px 0 33px;justify-content:space-between}
.up{display:flex;align-items:center;justify-content:space-between;width:270px;height:40px;margin:auto 0 0 25px;padding:0 14px 0 21px;border-radius:20px;background:#fff}
.up div{display:flex;align-items:center}
`, `<div class="compose"><ui-icon name="pencil" w="29" style="color:#000"></ui-icon><ui-text w="78" s="16.500" g="21">Compose</ui-text></div>
<nav-item active bold icon="inbox" label="Inbox" w="47" count="13,438" cw="46"></nav-item>
<nav-item icon="star" label="Starred" w="58"></nav-item>
<nav-item icon="clock" label="Snoozed" w="68"></nav-item>
<nav-item icon="send" label="Sent" w="36"></nav-item>
<nav-item bold icon="doc" label="Drafts" w="52" count="12" cw="14"></nav-item>
<nav-item icon="chevThin" label="More" w="40"></nav-item>
<div class="labels"><ui-text w="61" s="19">Labels</ui-text><ui-icon name="plus" w="22" style="color:#555857;margin-right:2px"></ui-icon></div>
<div class="up"><div><ui-icon name="one" w="20"></ui-icon><ui-text w="69" s="16.500" g="21">Upgrade</ui-text></div><ui-icon name="fwd" w="25" style="color:#000"></ui-icon></div>`);

define('message-toolbar', `
:host{display:flex;align-items:center;height:61px;padding-left:20px;box-sizing:border-box;color:#4d504f}
.sep{width:1px;height:25px;background:#dfe1e5;margin-left:25px}.c{color:#5f6368}
`, `<ui-icon name="back" w="23" g="1"></ui-icon><ui-icon name="archive" w="24" g="46"></ui-icon><ui-icon name="spam" w="24" g="31"></ui-icon><ui-icon name="trash" w="24" g="31"></ui-icon>
<div class="sep"></div><ui-icon name="unread" w="25" g="25"></ui-icon><ui-icon name="move" w="25" g="30"></ui-icon><ui-icon name="dots" w="24" g="25"></ui-icon>
<ui-text class="c" w="72" s="14" g="844">4 of 13,879</ui-text><ui-icon name="left" w="22" g="26"></ui-icon><ui-icon name="right" w="22" g="28"></ui-icon>
<ui-icon name="keyboard" w="22" h="13" g="24" style="margin-top:3px"></ui-icon><ui-icon name="caret" w="10" h="6" g="8" style="margin-bottom:2px"></ui-icon>`);

define('message-subject', `
:host{display:flex;align-items:center;height:46px;margin-top:18px;padding-left:90px}
.chip{display:flex;align-items:center;width:63px;height:23px;margin-left:13px;padding-left:5px;border-radius:5px;background:#dfe1df;color:#444746}
`, `<ui-text w="197" s="26.500">New Flight Deal!</ui-text><div class="chip"><ui-text w="37" s="14">Inbox</ui-text><ui-icon name="xThin" w="9" g="7"></ui-icon></div>
<ui-icon name="print" w="25" g="1058" style="color:#444746;margin-top:2px"></ui-icon><ui-icon name="open" w="25" g="20" style="color:#444746;margin-top:2px"></ui-icon>`);

define('message-body', `
:host{display:flex;padding-left:20px;margin-top:12px}
user-avatar{width:50px;height:50px;font-size:28px;font-weight:500;margin-top:8px}
.col{margin-left:20px;flex:1}
.from{display:flex;align-items:center;height:24px;margin-top:8px;font-weight:600}.gray{color:#5f6368;font-weight:400}
.to{display:flex;align-items:center;height:25px;color:#5f6368}
.text{margin-top:11px;font-family:"Liberation Sans",Arial,sans-serif;line-height:24px;color:#222}
.acts{display:flex;gap:10px;margin-top:73px;font-weight:500;color:#4d504f}
.b{display:flex;align-items:center;height:45px;border:1px solid #747775;border-radius:23px}
`, `<user-avatar>D</user-avatar><div class="col">
<div class="from"><ui-text w="206" s="17">debanilbora@gmail.com</ui-text><ui-text class="gray" w="180" s="14.500" g="814">10:20 AM (10 minutes ago)</ui-text>
<ui-icon name="star" w="25" g="26" style="color:#4d504f;margin-top:1px"></ui-icon><ui-icon name="smile" w="26" g="24" style="color:#a5a7a6"></ui-icon><ui-icon name="reply" w="26" g="24" style="color:#4d504f"></ui-icon><ui-icon name="dots" w="24" g="25" style="color:#4d504f"></ui-icon></div>
<div class="to"><ui-text w="71" s="14.500">to bcc: me</ui-text><ui-icon name="caret" w="10" h="6" g="8" style="color:#444746;margin-top:2px"></ui-icon></div>
<div class="text"><ui-text w="404" s="16.250">Low price alert! Only GBP199.99 to fly from JFK to KUL.</ui-text><ui-text w="317" s="16.250">Departure: 2025-08-22, Return: 2025-11-19.</ui-text></div>
<div class="acts"><div class="b" style="width:130px"><ui-icon name="reply" w="25" g="21"></ui-icon><ui-text w="46" s="16.500" g="10">Reply</ui-text></div>
<div class="b" style="width:139px"><ui-icon name="forward" w="25" g="15"></ui-icon><ui-text w="67" s="16.500" g="10">Forward</ui-text></div>
<div class="b" style="width:45px;border-color:#a5a7a6;color:#a5a7a6"><ui-icon name="smile" w="27" g="8"></ui-icon></div></div></div>`);

define('message-pane', ':host{display:block;width:1530px;height:769px;border-radius:20px;background:#fff;overflow:hidden}',
  '<message-toolbar></message-toolbar><message-subject></message-subject><message-body></message-body>');

define('side-rail', `
:host{display:flex;flex-direction:column;align-items:center;width:70px;height:789px;padding:24px 0 24px 1px;box-sizing:border-box}
.apps{display:flex;flex-direction:column;gap:46px}.line{width:25px;height:1px;background:#dadce0;margin:42px 0 43px}
.hide{margin-top:auto}
`, `<div class="apps"><ui-icon name="calendar" w="24"></ui-icon><ui-icon name="keep" w="24"></ui-icon><ui-icon name="tasks" w="24"></ui-icon><ui-icon name="contacts" w="24"></ui-icon></div>
<div class="line"></div><ui-icon name="plus" w="25" style="color:#000"></ui-icon><div class="hide"><ui-icon name="right" w="24"></ui-icon></div>`);

define('task-button', `
:host{display:flex;position:relative;flex:none;width:55.080px;height:60px;align-items:center;justify-content:center}
:host([active]):before{content:"";position:absolute;left:3px;top:5px;width:48px;height:48px;border-radius:5px;background:#e9f6f6;box-shadow:0 0 1px #9ab}
:host([active]):after,:host([running]):after{content:"";position:absolute;bottom:7px;height:4px;border-radius:2px;width:20px;background:#24808f}
:host([running]):after{width:8px;background:#7b8788}
ui-icon{position:relative;margin-bottom:1px}
`, el => `<ui-icon name="${el.getAttribute('icon')}" w="${el.getAttribute('w') || 30}" h="${el.getAttribute('h') || 30}"></ui-icon>`);

define('task-bar', `
:host{display:flex;align-items:center;height:60px;border-top:1px solid #a5b5b8;box-sizing:border-box;background:linear-gradient(90deg,#d0e7ec 0,#c8eced 160px,#cbedee 460px,#d9e8e8 720px,#e2e6e5 900px,#dfe6e6 1050px,#cdeaeb 1320px,#c8ebee 1450px,#cbecee 1920px);font-family:"Open Sans",sans-serif;color:#10282b}
.weather{position:relative;width:32px;margin-left:25px}
.badge{position:absolute;left:15px;top:-4px;width:20px;height:20px;border-radius:50%;background:#c42b1c;color:#fff;font-size:13px;font-weight:600;line-height:20px;text-align:center}
.apps{display:flex;margin-left:223.500px}
.lang,.time{display:flex;flex-direction:column;line-height:20px}.lang{width:40px;align-items:center;margin-left:17px}.time{align-items:flex-end;margin-left:auto;margin-right:24px;margin-top:-1px}.lang{margin-top:-1px}
`, `<div class="weather"><ui-icon name="weather" w="32" h="36"></ui-icon><div class="badge">4</div></div>
<div class="apps">${['win" w="29" h="29', 'wsearch', 'taskview', 'copilot', 'teams', 'edge', 'files', 'store', 'gift', 'outlook', 'notepad', 'xampp', 'chrome', 'opera', 'cmd" w="28" h="24', 'postman', 'brave" w="26" h="30', 'pycharm" running="', 'wps', 'chrome" active="'].map(n => `<task-button icon="${n}"></task-button>`).join('')}</div>
<ui-icon name="up" w="18" g="82"></ui-icon><ui-icon name="signal" w="19" g="20"></ui-icon><ui-icon name="onedrive" w="22" h="20" g="20"></ui-icon><ui-icon name="tkeys" w="22" h="18" g="18"></ui-icon><ui-icon name="touchpad" w="22" h="18" g="18"></ui-icon>
<div class="lang"><ui-text w="29" s="14.500">ENG</ui-text><ui-text w="15" s="14.500">IN</ui-text></div>
<ui-icon name="wifi" w="22" h="18" g="16"></ui-icon><ui-icon name="volume" w="22" h="18" g="7"></ui-icon><ui-icon name="battery" w="22" h="18" g="8"></ui-icon>
<div class="time"><ui-text w="63" s="14.500">10:30 AM</ui-text><ui-text w="77" s="14.500">21-08-2025</ui-text></div>`);

define('app-desktop', ':host{display:flex;flex-direction:column;width:1920px;height:1080px;background:#f8fafe}.body{display:flex;height:789px}',
  '<tab-strip></tab-strip><address-bar></address-bar><bookmark-bar></bookmark-bar><mail-header></mail-header><div class="body"><mail-sidebar></mail-sidebar><message-pane></message-pane><side-rail></side-rail></div><task-bar></task-bar>');
</script>
</body>
</html>
